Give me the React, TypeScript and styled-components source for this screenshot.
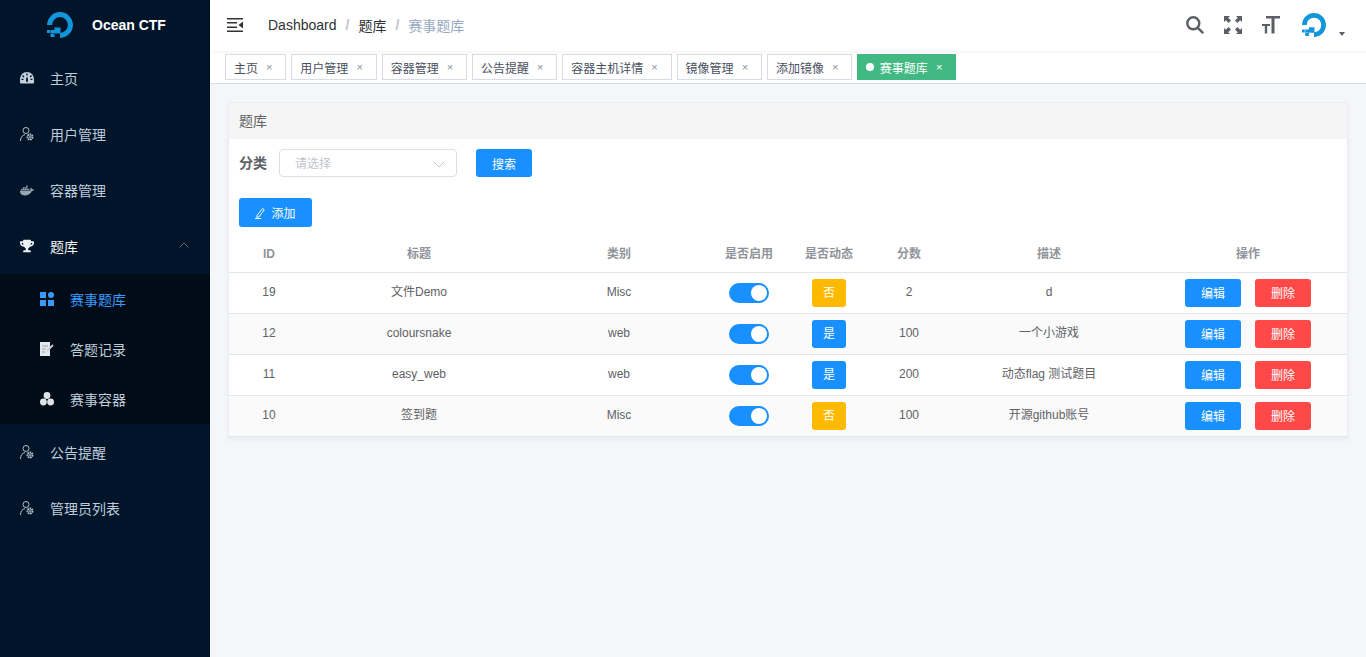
import React from "react";
import styled, { createGlobalStyle } from "styled-components";
import { FaDocker, FaTrophy } from "react-icons/fa";

const Global = createGlobalStyle`
  html, body { margin: 0; padding: 0; height: 100%; }
  body { font-family: "Liberation Sans", "Noto Sans CJK SC", sans-serif; background: #f5f6f8; }
  #root { height: 100%; }
  * { box-sizing: border-box; }
`;

const Shell = styled.div`display: flex; width: 1366px; height: 657px; overflow: hidden;`;
const Sidebar = styled.aside`width: 210px; flex: none; background: #001529; display: flex; flex-direction: column;`;
const Brand = styled.div`height: 50px; display: flex; align-items: center; padding-left: 47px; gap: 19px; color: #fff; font-size: 14px; font-weight: 700;`;
const MenuItem = styled.div<{ $open?: boolean }>`
  height: 56px; display: flex; align-items: center; padding-left: 20px; font-size: 14px; position: relative;
  color: ${p => (p.$open ? "#f4f4f5" : "#bfcbd9")};
`;
const IconSlot = styled.span`width: 14px; height: 14px; margin-right: 16px; display: flex; align-items: center; justify-content: center; flex: none;`;
const Chevron = styled.svg`position: absolute; left: 179px; top: 24px;`;
const SubMenu = styled.div`background: #000c17; display: flex; flex-direction: column;`;
const SubItem = styled.div<{ $active?: boolean }>`
  height: 50px; display: flex; align-items: center; padding-left: 40px; font-size: 14px;
  color: ${p => (p.$active ? "#3a9bff" : "#bfcbd9")};
`;
const Column = styled.div`flex: 1; min-width: 0; display: flex; flex-direction: column;`;
const Navbar = styled.header`height: 51px; background: #fff; display: flex; align-items: center; padding: 0 21px 1px 17px; box-shadow: 0 1px 4px rgba(0, 21, 41, 0.06); position: relative;`;
const Burger = styled.svg`margin-right: 25px; flex: none;`;
const Crumbs = styled.nav`display: flex; align-items: center; font-size: 14px; color: #303133; flex: 1;`;
const Sep = styled.span`margin: 0 9px; color: #c0c4cc; font-weight: 700;`;
const CrumbLast = styled.span`color: #97a8be;`;
const Tools = styled.div`display: flex; align-items: center; gap: 20px;`;
const Avatar = styled.div`display: flex; align-items: flex-end; gap: 13px; margin-left: 2px;`;
const Caret = styled.span`width: 0; height: 0; border: 3.5px solid transparent; border-top: 4px solid #5a5e66; border-bottom: 0; margin-bottom: 1px;`;
const TagBar = styled.div`height: 33px; background: #fff; border-bottom: 1px solid #d8dce5; display: flex; padding: 3px 0 0 15px; gap: 5px; box-shadow: 0 1px 3px rgba(0,0,0,.04);`;
const Tag = styled.div<{ $active?: boolean }>`
  height: 26px; display: flex; align-items: center; padding: 0 8px; font-size: 12px; border: 1px solid ${p => (p.$active ? "#42b983" : "#d8dce5")};
  background: ${p => (p.$active ? "#42b983" : "#fff")}; color: ${p => (p.$active ? "#fff" : "#495060")};
`;
const Dot = styled.span`width: 8px; height: 8px; border-radius: 50%; background: #fff; margin-right: 5.6px;`;
const Close = styled.span<{ $active?: boolean }>`width: 16px; margin-left: 3.3px; text-align: center; font-size: 11px; color: ${p => (p.$active ? "#fff" : "#8a93a3")};`;
const Main = styled.main`flex: 1; background: #f5f6f8; padding: 18px;`;
const Card = styled.section`background: #fff; border: 1px solid #ebeef5; box-shadow: 0 2px 4px rgba(0, 0, 0, 0.05);`;
const CardHead = styled.div`height: 36px; background: #f5f5f5; display: flex; align-items: center; padding-left: 10px; font-size: 14px; line-height: 14px; color: #606266;`;
const Toolbar = styled.div`padding: 10px 10px 9px;`;
const Filter = styled.div`display: flex; align-items: center; height: 28px; margin-bottom: 21px;`;
const FilterLabel = styled.label`font-size: 14px; line-height: 14px; font-weight: 700; color: #606266; margin-right: 12px; width: 28px;`;
const Select = styled.div`width: 178px; height: 28px; border: 1px solid #dcdfe6; border-radius: 4px; display: flex; align-items: center; justify-content: space-between; padding: 2px 11px 0 15px; font-size: 12px; line-height: 12px; color: #c0c4cc;`;
const Btn = styled.button<{ $color?: string }>`
  width: 56px; height: 28px; border: 0; border-radius: 3px; padding: 0; font: inherit; font-size: 12px; color: #fff;
  background: ${p => p.$color || "#1890ff"}; display: inline-flex; align-items: center; justify-content: center;
`;
const SearchBtn = styled(Btn)`margin-left: 19px;`;
const AddBtn = styled(Btn)`width: 73px; height: 29px; gap: 5px; display: flex;`;
const RowBtn = styled(Btn)`padding-top: 2px;`;
const Table = styled.table`width: 100%; border-collapse: separate; border-spacing: 0; table-layout: fixed; font-size: 12px; line-height: 14px; color: #606266;`;
const Th = styled.th`height: 37px; border-bottom: 1px solid #dfe6ec; color: #909399; font-weight: 700; padding: 0; text-align: center;`;
const Row = styled.tr<{ $odd: boolean }>`background: ${p => (p.$odd ? "#fafafa" : "#fff")};`;
const Td = styled.td<{ $text?: boolean }>`height: 41px; border-bottom: 1px solid #dfe6ec; text-align: center; padding: 0 0 ${p => (p.$text ? "2px" : "0")};`;
const Switch = styled.span`display: inline-block; width: 40px; height: 20px; border-radius: 10px; background: #1890ff; position: relative; vertical-align: middle;
  &::after { content: ""; position: absolute; right: 2px; top: 2px; width: 16px; height: 16px; border-radius: 50%; background: #fff; }
`;
const Badge = styled.span<{ $yes: boolean }>`display: inline-flex; width: 34px; height: 28px; border-radius: 3px; align-items: center; justify-content: center; color: #fff; background: ${p => (p.$yes ? "#1890ff" : "#ffba00")}; vertical-align: middle;`;
const Ops = styled.div`display: flex; justify-content: center; gap: 14px;`;

const Logo = ({ size }: { size: number }) => (
  <svg width={size} height={size} viewBox="0 0 26 26" fill="none">
    <path d="M2.600 13A10.400 10.400 0 1 1 13 23.400" stroke="#1296db" strokeWidth="5" />
    <path fill="#1296db" d="M7.500 15.500h6v6h-6zM3.500 18h4v3h-4zM0 18h3v3H0zM3.500 21.500h4V25h-4z" />
  </svg>
);
const Gauge = () => (
  <svg width="14" height="12" viewBox="0 0 14 12">
    <path fill="#c4d0dc" fillRule="evenodd" d="M7 0a7 7 0 0 1 7 7v3.600a.9.9 0 0 1-.9.9H.9a.9.9 0 0 1-.9-.9V7a7 7 0 0 1 7-7ZM6.300 1.600v2h1.400v-2ZM3 3 2 4l1.400 1.400 1-1Zm8 0L9.600 4.400l1 1L12 4ZM1.500 6.700v1.400h2V6.700Zm9 0v1.400h2V6.700ZM6.200 5.500 6 9.800h2l-.2-4.300Z" />
  </svg>
);
const UserGear = () => (
  <svg width="14" height="14" viewBox="0 0 14 14" fill="none" stroke="#b4c0cc" strokeWidth="1">
    <circle cx="6" cy="3.500" r="3" />
    <path d="M.5 14c0-3.500 1.800-6 4.500-6.300" />
    <circle cx="10" cy="10" r="2.500" strokeWidth="2" strokeDasharray="1.600 .6" />
    <circle cx="10" cy="10" r=".9" fill="#b4c0cc" stroke="none" />
  </svg>
);
const Grid = () => (
  <svg width="14" height="14" viewBox="0 0 14 14" fill="#3a9bff">
    <path d="M0 0h6v6H0zM0 8h6v6H0zM8 8h6v6H8z" />
    <circle cx="11" cy="3" r="3" />
  </svg>
);
const Note = () => (
  <svg width="14" height="14" viewBox="0 0 14 14">
    <path fill="#e4e7ec" d="M0 0h10v14H0z" />
    <path stroke="#9aa3ad" strokeWidth="1" d="M2 4h6M2 7h4M2 10h3" />
    <path stroke="#c8ced6" strokeWidth="1.800" d="M7 9l6-6" />
  </svg>
);
const Balls = () => (
  <svg width="14" height="14" viewBox="0 0 14 14" fill="#dfe3e8">
    <circle cx="7" cy="3.500" r="3.400" />
    <circle cx="3.400" cy="10" r="3.400" />
    <circle cx="10.600" cy="10" r="3.400" />
  </svg>
);

const menuTop = [
  { label: "主页", icon: <Gauge /> },
  { label: "用户管理", icon: <UserGear /> },
  { label: "容器管理", icon: <FaDocker size={15} color="#98a5b3" /> },
];
const subs = [
  { label: "赛事题库", icon: <Grid />, active: true },
  { label: "答题记录", icon: <Note /> },
  { label: "赛事容器", icon: <Balls /> },
];
const tags = ["主页", "用户管理", "容器管理", "公告提醒", "容器主机详情", "镜像管理", "添加镜像"];
const cols = [
  { label: "ID", w: 80 }, { label: "标题", w: 220 }, { label: "类别", w: 180 }, { label: "是否启用", w: 80 },
  { label: "是否动态", w: 80 }, { label: "分数", w: 80 }, { label: "描述", w: 200 }, { label: "操作", w: 198 },
];
const rows = [
  { id: 19, title: "文件Demo", cat: "Misc", dyn: false, score: 2, desc: "d" },
  { id: 12, title: "coloursnake", cat: "web", dyn: true, score: 100, desc: "一个小游戏" },
  { id: 11, title: "easy_web", cat: "web", dyn: true, score: 200, desc: "动态flag 测试题目" },
  { id: 10, title: "签到题", cat: "Misc", dyn: false, score: 100, desc: "开源github账号" },
];

export default function App() {
  return (
    <Shell>
      <Global />
      <Sidebar>
        <Brand><Logo size={26} /><span>Ocean CTF</span></Brand>
        {menuTop.map(m => (
          <MenuItem key={m.label}><IconSlot>{m.icon}</IconSlot>{m.label}</MenuItem>
        ))}
        <MenuItem $open>
          <IconSlot><FaTrophy size={14} color="#eef1f4" /></IconSlot>题库
          <Chevron width="10" height="6" viewBox="0 0 10 6" fill="none" stroke="#5f6e7e"><path d="M.5 5.500L5 1l4.500 4.500" /></Chevron>
        </MenuItem>
        <SubMenu>
          {subs.map(s => (
            <SubItem key={s.label} $active={s.active}><IconSlot>{s.icon}</IconSlot>{s.label}</SubItem>
          ))}
        </SubMenu>
        <MenuItem><IconSlot><UserGear /></IconSlot>公告提醒</MenuItem>
        <MenuItem><IconSlot><UserGear /></IconSlot>管理员列表</MenuItem>
      </Sidebar>
      <Column>
        <Navbar>
          <Burger width="16" height="14" viewBox="0 0 16 14" fill="#333">
            <path d="M0 0h16v1.600H0zM0 12.400h16V14H0zM0 4h10v1.600H0zM0 8.400h10V10H0zM16 3.500v7L11.500 7z" />
          </Burger>
          <Crumbs>
            Dashboard<Sep>/</Sep>题库<Sep>/</Sep><CrumbLast>赛事题库</CrumbLast>
          </Crumbs>
          <Tools>
            <svg width="18" height="18" viewBox="0 0 18 18" fill="none" stroke="#5a5e66" strokeWidth="2.400">
              <circle cx="7.300" cy="7.300" r="6" /><path d="M11.600 11.600L17.200 17.200" />
            </svg>
            <svg width="18" height="18" viewBox="0 0 18 18" fill="#5a5e66">
              <path d="M0 0h6L4.200 1.800 7 4.600 4.600 7 1.800 4.200 0 6zM18 0v6l-1.800-1.800L13.400 7 11 4.600l2.800-2.800L12 0zM0 18v-6l1.800 1.800L4.600 11 7 13.400l-2.800 2.800L6 18zM18 18h-6l1.800-1.800L11 13.400l2.400-2.400 2.800 2.800L18 12z" />
            </svg>
            <svg width="18" height="18" viewBox="0 0 18 18" fill="#5a5e66">
              <path d="M4 0h14v2.500h-5.500V17.500h-3V2.500H4zM0 8h8v2H5.200v7.500H2.800V10H0z" />
            </svg>
            <Avatar><Logo size={24} /><Caret /></Avatar>
          </Tools>
        </Navbar>
        <TagBar>
          {tags.map(t => (
            <Tag key={t}>{t}<Close>×</Close></Tag>
          ))}
          <Tag $active><Dot />赛事题库<Close $active>×</Close></Tag>
        </TagBar>
        <Main>
          <Card>
            <CardHead>题库</CardHead>
            <Toolbar>
              <Filter>
                <FilterLabel>分类</FilterLabel>
                <Select>
                  请选择
                  <svg width="12" height="7" viewBox="0 0 12 7" fill="none" stroke="#c0c4cc"><path d="M.5.500L6 6l5.500-5.500" /></svg>
                </Select>
                <SearchBtn>搜索</SearchBtn>
              </Filter>
              <AddBtn>
                <svg width="11" height="12" viewBox="0 0 11 12" fill="none" stroke="#fff"><path d="M2 8.500L7.500 1.500l1.800 1.400L3.800 10l-2 .4zM0 11.500h6" /></svg>
                添加
              </AddBtn>
            </Toolbar>
            <Table>
              <colgroup>{cols.map(c => <col key={c.label} width={c.w} />)}</colgroup>
              <thead>
                <tr>{cols.map(c => <Th key={c.label}>{c.label}</Th>)}</tr>
              </thead>
              <tbody>
                {rows.map((r, i) => (
                  <Row key={r.id} $odd={i % 2 === 1}>
                    <Td $text>{r.id}</Td>
                    <Td $text>{r.title}</Td>
                    <Td $text>{r.cat}</Td>
                    <Td><Switch /></Td>
                    <Td><Badge $yes={r.dyn}>{r.dyn ? "是" : "否"}</Badge></Td>
                    <Td $text>{r.score}</Td>
                    <Td $text>{r.desc}</Td>
                    <Td><Ops><RowBtn>编辑</RowBtn><RowBtn $color="#ff4949">删除</RowBtn></Ops></Td>
                  </Row>
                ))}
              </tbody>
            </Table>
          </Card>
        </Main>
      </Column>
    </Shell>
  );
}
